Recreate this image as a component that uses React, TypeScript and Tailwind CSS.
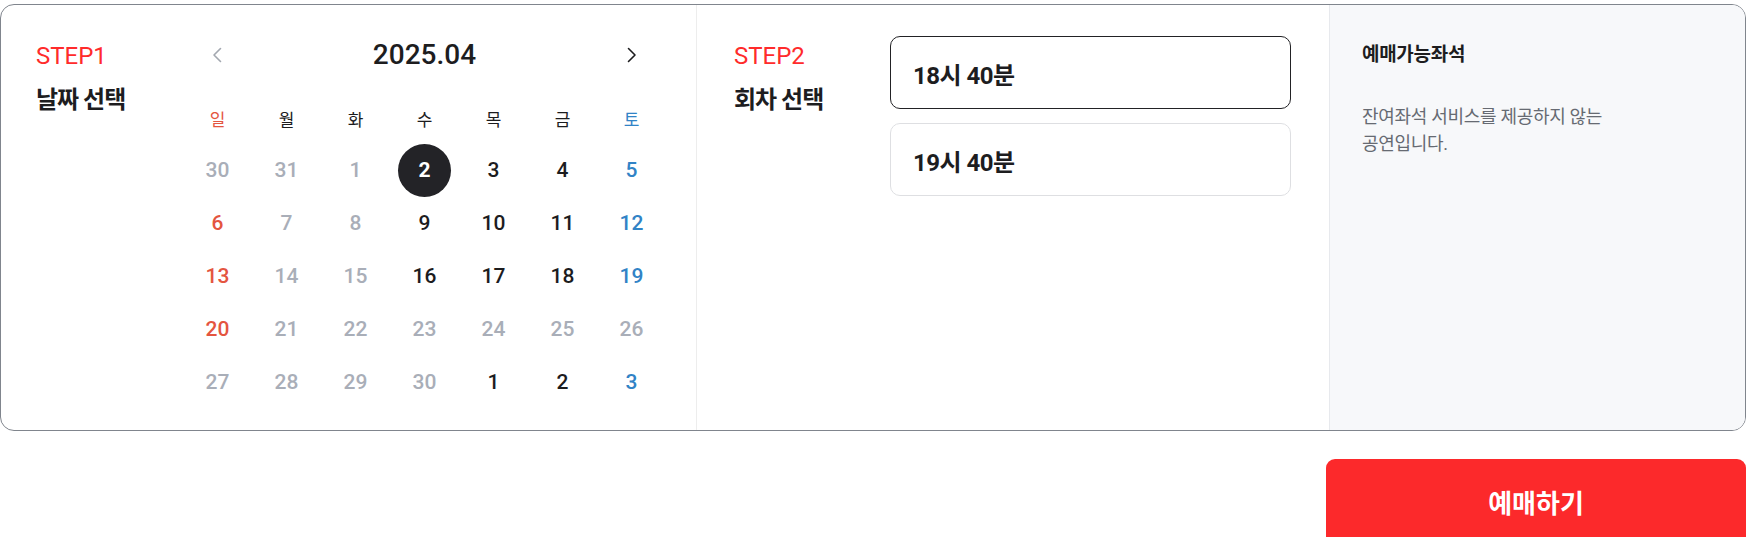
import React from "react";

type Tone = "red" | "blue" | "gray" | "dark";

type DayCell = {
  day: number;
  tone: Tone;
  selected?: boolean;
};

const toneClass: Record<Tone, string> = {
  red: "text-[#e4553f]",
  blue: "text-[#3183c6]",
  gray: "text-[#a9aeb8]",
  dark: "text-[#1c1c1e]",
};

const weekdays: { label: string; tone: Tone }[] = [
  { label: "일", tone: "red" },
  { label: "월", tone: "dark" },
  { label: "화", tone: "dark" },
  { label: "수", tone: "dark" },
  { label: "목", tone: "dark" },
  { label: "금", tone: "dark" },
  { label: "토", tone: "blue" },
];

const weeks: DayCell[][] = [
  [
    { day: 30, tone: "gray" },
    { day: 31, tone: "gray" },
    { day: 1, tone: "gray" },
    { day: 2, tone: "dark", selected: true },
    { day: 3, tone: "dark" },
    { day: 4, tone: "dark" },
    { day: 5, tone: "blue" },
  ],
  [
    { day: 6, tone: "red" },
    { day: 7, tone: "gray" },
    { day: 8, tone: "gray" },
    { day: 9, tone: "dark" },
    { day: 10, tone: "dark" },
    { day: 11, tone: "dark" },
    { day: 12, tone: "blue" },
  ],
  [
    { day: 13, tone: "red" },
    { day: 14, tone: "gray" },
    { day: 15, tone: "gray" },
    { day: 16, tone: "dark" },
    { day: 17, tone: "dark" },
    { day: 18, tone: "dark" },
    { day: 19, tone: "blue" },
  ],
  [
    { day: 20, tone: "red" },
    { day: 21, tone: "gray" },
    { day: 22, tone: "gray" },
    { day: 23, tone: "gray" },
    { day: 24, tone: "gray" },
    { day: 25, tone: "gray" },
    { day: 26, tone: "gray" },
  ],
  [
    { day: 27, tone: "gray" },
    { day: 28, tone: "gray" },
    { day: 29, tone: "gray" },
    { day: 30, tone: "gray" },
    { day: 1, tone: "dark" },
    { day: 2, tone: "dark" },
    { day: 3, tone: "blue" },
  ],
];

const times = ["18시 40분", "19시 40분"];

const FONT = "font-['Roboto','Noto_Sans_CJK_KR',sans-serif]";

const Chevron: React.FC<{ dir: "left" | "right"; color: string }> = ({
  dir,
  color,
}) => (
  <svg width="10" height="16" viewBox="0 0 10 16" fill="none">
    <polyline
      points={dir === "left" ? "8.5,1.5 2,8 8.5,14.5" : "1.5,1.5 8,8 1.5,14.5"}
      stroke={color}
      strokeWidth="1.6"
      strokeLinecap="round"
      strokeLinejoin="round"
    />
  </svg>
);

const StepLabel: React.FC<{ step: string; title: string }> = ({
  step,
  title,
}) => (
  <div className="flex flex-col">
    <span className="text-[24px] leading-[32px] text-[#ff2b2b]">{step}</span>
    <span className="mt-[12px] text-[24px] leading-[32px] font-bold tracking-[-1px] text-[#1d1d1f]">
      {title}
    </span>
  </div>
);

export default function App() {
  return (
    <div className={`${FONT} w-[1747px] bg-white pt-1`}>
      <div className="flex h-[427px] w-[1746px] overflow-hidden rounded-[14px] border border-[#80858d]">
        {/* STEP1 */}
        <section className="flex w-[695px] shrink-0 pl-[35px] pr-[30px]">
          <div className="w-[147px] shrink-0 pt-[35px]">
            <StepLabel step="STEP1" title="날짜 선택" />
          </div>
          <div className="w-[483px] shrink-0 pt-[30px]">
            <div className="flex h-[40px] items-center justify-between px-[29px]">
              <button className="flex h-[40px] w-[10px] items-center">
                <Chevron dir="left" color="#a3a8b0" />
              </button>
              <span className="text-[28px] font-medium text-[#1d1d1f]">
                2025.04
              </span>
              <button className="flex h-[40px] w-[10px] items-center">
                <Chevron dir="right" color="#1d1d1f" />
              </button>
            </div>
            <div className="mt-[26px] grid h-[40px] grid-cols-7 items-center">
              {weekdays.map((w) => (
                <span
                  key={w.label}
                  className={`text-center text-[17px] ${toneClass[w.tone]}`}
                >
                  {w.label}
                </span>
              ))}
            </div>
            <div className="mt-[3px] flex flex-col">
              {weeks.map((week, wi) => (
                <div key={wi} className="grid h-[53px] grid-cols-7">
                  {week.map((cell, ci) => (
                    <div
                      key={ci}
                      className="flex items-center justify-center"
                    >
                      {cell.selected ? (
                        <span className="flex h-[53px] w-[53px] items-center justify-center rounded-full bg-[#232327] text-[21px] font-bold text-white">
                          {cell.day}
                        </span>
                      ) : (
                        <span
                          className={`text-[21px] font-medium ${toneClass[cell.tone]}`}
                        >
                          {cell.day}
                        </span>
                      )}
                    </div>
                  ))}
                </div>
              ))}
            </div>
          </div>
        </section>

        {/* STEP2 */}
        <section className="flex w-[633px] shrink-0 border-l border-[#ededed] pl-[37px] pr-[38px]">
          <div className="w-[156px] shrink-0 pt-[35px]">
            <StepLabel step="STEP2" title="회차 선택" />
          </div>
          <div className="flex w-[401px] shrink-0 flex-col gap-[14px] pt-[31px]">
            {times.map((t, i) => (
              <button
                key={t}
                className={`flex h-[73px] items-center rounded-[10px] border bg-white pl-[22px] pt-[6px] text-left text-[24px] font-bold tracking-[-0.5px] text-[#1d1d1f] ${
                  i === 0 ? "border-[#222225]" : "border-[#dedfe2]"
                }`}
              >
                {t}
              </button>
            ))}
          </div>
        </section>

        {/* 예매가능좌석 */}
        <aside className="flex-1 border-l border-[#e7e9ed] bg-[#f7f8fa] pl-[32px] pt-[36px]">
          <h3 className="text-[19px] leading-[28px] font-bold tracking-[-0.3px] text-[#1d1d1f]">
            예매가능좌석
          </h3>
          <p className="mt-[34px] text-[18px] leading-[27px] tracking-[-0.3px] text-[#666a72]">
            잔여좌석 서비스를 제공하지 않는
            <br />
            공연입니다.
          </p>
        </aside>
      </div>

      <div className="mt-[28px] flex w-[1746px] justify-end">
        <button className="h-[88px] w-[420px] rounded-[9px] bg-[#fc292b] pt-[2px] text-[26px] font-bold text-white">
          예매하기
        </button>
      </div>
    </div>
  );
}
